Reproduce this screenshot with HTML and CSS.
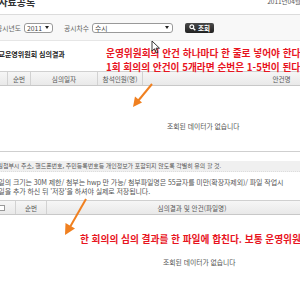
FILE: index.html
```html
<!DOCTYPE html>
<html lang="ko">
<head>
<meta charset="utf-8">
<link rel="stylesheet" href="styles.css">
</head>
<body>
<div class="page">
  <div class="top">
    <span class="page-title">공시자료공록</span>
    <span class="date">2011년04월12일</span>
  </div>
  <div class="search">
    <span class="label first">공시년도</span>
    <span class="select sel-year">2011<i class="arr"></i></span>
    <span class="label">공시차수</span>
    <span class="select sel-ord">수시<i class="arr"></i></span>
    <span class="btn"><svg width="7" height="7" viewBox="0 0 7 7"><circle cx="2.8" cy="2.8" r="1.9" fill="none" stroke="#fff" stroke-width="1.2"/><path d="M4.2 4.2L6.3 6.3" stroke="#fff" stroke-width="1.4"/></svg>조회</span>
  </div>
  <div class="sec-title">학교운영위원회 심의결과</div>
  <div class="thead t1">
    <div class="c c0"></div>
    <div class="c c1">순번</div>
    <div class="c c2">심의일자</div>
    <div class="c c3">참석인원(명)</div>
    <div class="c c4">안건명</div>
  </div>
  <div class="empty e1">조회된 데이터가 없습니다</div>
  <div class="notice">
    <div class="warn">파일첨부시 주소, 핸드폰번호, 주민등록번호등 개인정보가 포함되지 않도록 각별히 유의 할 것.</div>
    <div class="info">파일의 크기는 30M 제한/ 첨부는 hwp 만 가능/ 첨부파일명은 55글자를 미만(확장자제외)/ 파일 작업시<br>파일을 추가 하신 뒤 '저장'을 하셔야 실제로 저장됩니다.</div>
  </div>
  <div class="thead t2">
    <div class="c d0"><span class="chk"></span></div>
    <div class="c d1">순번</div>
    <div class="c d2">심의결과 및 안건(파일명)</div>
  </div>
  <div class="empty e2">조회된 데이터가 없습니다</div>
</div>

<div class="note n1">운영위원회의 안건 하나마다 한 줄로 넣어야 한다<br>1회 회의의 안건이 5개라면 순번은 1-5번이 된다.</div>
<div class="note n2">한 회의의 심의 결과를 한 파일에 합친다. 보통 운영위원회</div>

<svg class="arrow a1" width="24" height="26" viewBox="0 0 24 26"><path d="M21 1L7 18" stroke="#f08020" stroke-width="2" fill="none"/><path d="M2 24L4 13.5L11 19.5Z" fill="#f08020"/></svg>
<svg class="arrow a2" width="26" height="38" viewBox="0 0 26 38"><path d="M23 1L7 29" stroke="#f08020" stroke-width="2" fill="none"/><path d="M2 37L2.5 25L12 30.5Z" fill="#f08020"/></svg>
<svg class="cursor" width="10" height="14" viewBox="0 0 10 14"><path d="M1 1L1 11L3.5 8.8L5.5 13L7 12.3L5 8.2L8.5 8.2Z" fill="#fff" stroke="#222" stroke-width="0.9" stroke-linejoin="round"/></svg>
</body>
</html>
```

FILE: styles.css
```css
html, body {
  margin: 0;
  padding: 0;
  background: #fff;
  overflow: hidden;
  width: 300px;
  height: 300px;
}
body {
  position: relative;
  font-family: "Noto Sans CJK KR", "Noto Sans", sans-serif;
  color: #555;
}
.page {
  width: 420px;
  margin-left: -8px;
}
.top {
  height: 14px;
  display: flex;
  justify-content: space-between;
  overflow: hidden;
  width: 308px;
}
.page-title {
  font-size: 10px;
  font-weight: bold;
  color: #333;
  line-height: 10px;
  margin-top: -3px;
  margin-left: -12px;
}
.date {
  font-size: 6.5px;
  color: #555;
  line-height: 8px;
  margin-top: -3px;
  margin-right: -14px;
}
.search {
  height: 25px;
  border-top: 1px solid #dcdcdc;
  border-bottom: 1px solid #e6e6e6;
  background: #f8f8f8;
  display: flex;
  align-items: center;
  font-size: 6.8px;
  color: #666;
}
.label.first { margin-left: 4px; }
.label { margin-right: 3px; }
.select {
  box-sizing: border-box;
  height: 10px;
  border: 1px solid #999;
  border-radius: 3px;
  background: #fff;
  display: flex;
  align-items: center;
  padding: 0 3px 0 2px;
  color: #444;
  font-size: 6.8px;
  justify-content: space-between;
}
.sel-year { width: 29px; margin-right: 11px; }
.sel-ord { width: 81px; margin-right: 12px; }
.arr {
  width: 0; height: 0;
  border-left: 2.5px solid transparent;
  border-right: 2.5px solid transparent;
  border-top: 3px solid #222;
}
.btn {
  box-sizing: border-box;
  width: 29px;
  height: 10px;
  border-radius: 2px;
  background: linear-gradient(#4a4a4a, #222);
  color: #fff;
  font-size: 6.5px;
  font-weight: bold;
  display: flex;
  align-items: center;
  justify-content: center;
  gap: 2px;
}
.sec-title {
  margin-top: 8px;
  font-size: 7px;
  font-weight: bold;
  color: #222;
  height: 10px;
  line-height: 10px;
}
.thead {
  display: flex;
  height: 15px;
  box-sizing: border-box;
  border-top: 1px solid #d0d0d0;
  border-bottom: 1px solid #c8c8c8;
  background: linear-gradient(#f6f6f6, #e9e9e9);
  font-size: 6.6px;
  color: #555;
}
.t1 { margin-top: 12px; }
.c {
  display: flex;
  align-items: center;
  justify-content: center;
  border-right: 1px solid #d2d2d2;
  flex: none;
}
.c0 { width: 15px; }
.c1 { width: 22px; }
.c2 { width: 66px; }
.c3 { width: 44px; }
.c4 { width: 277px; border-right: none; }
.empty {
  font-size: 6.8px;
  color: #555;
}
.e1 {
  height: 66px;
  box-sizing: border-box;
  padding: 35px 0 0 175px;
  border-bottom: 1px solid #cfcfcf;
}
.notice {
  color: #555;
}
.warn {
  margin-top: 9px;
  background: #f0f0f0;
  height: 10px;
  line-height: 10px;
  font-size: 5.95px;
  border-bottom: 1px dotted #ddd;
}
.info {
  margin-top: 6px;
  font-size: 7px;
  line-height: 8.5px;
  letter-spacing: -0.1px;
}
.t2 { margin-top: 5px; }
.d0 { width: 23px; justify-content: flex-start; }
.d1 { width: 30px; }
.d2 { width: 290px; border-right: none; }
.chk {
  width: 4px; height: 4px;
  border: 1px solid #999;
  background: #fff;
  margin-left: 7px;
}
.e2 {
  padding: 42px 0 0 171px;
}
.note {
  position: absolute;
  color: #e8141e;
  font-weight: bold;
  font-size: 9.7px;
  white-space: nowrap;
  line-height: 14px;
  letter-spacing: 0;
}
.n1 { left: 106px; top: 46px; }
.n2 { left: 80px; top: 232px; }
.arrow { position: absolute; }
.a1 { left: 131px; top: 83px; }
.a2 { left: 63px; top: 198px; }
.cursor { position: absolute; left: 151px; top: 40px; }
```
